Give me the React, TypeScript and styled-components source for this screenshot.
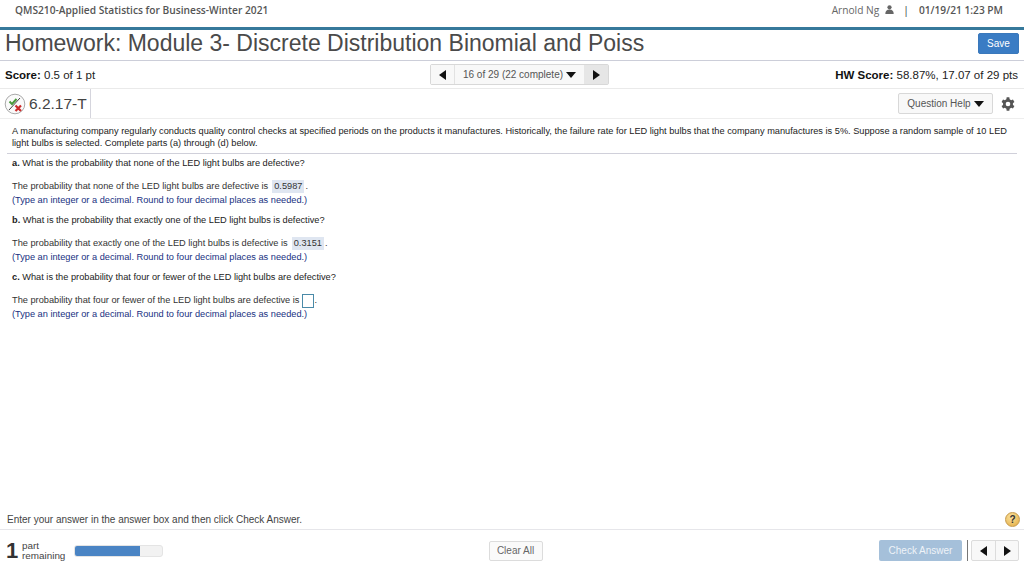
import styled, { createGlobalStyle } from 'styled-components';

const GlobalStyle = createGlobalStyle`
  html, body {
    margin: 0;
    padding: 0;
    background: #fff;
  }
  #root {
    height: 575px;
  }
`;

const parts = [
  {
    label: 'a.',
    question: 'What is the probability that none of the LED light bulbs are defective?',
    answerText: 'The probability that none of the LED light bulbs are defective is',
    value: '0.5987',
  },
  {
    label: 'b.',
    question: 'What is the probability that exactly one of the LED light bulbs is defective?',
    answerText: 'The probability that exactly one of the LED light bulbs is defective is',
    value: '0.3151',
  },
  {
    label: 'c.',
    question: 'What is the probability that four or fewer of the LED light bulbs are defective?',
    answerText: 'The probability that four or fewer of the LED light bulbs are defective is',
    value: '',
  },
];

const LeftArrow = () => (
  <svg width="7" height="10" viewBox="0 0 7 10">
    <path d="M7 0v10L0 5z" fill="#111" />
  </svg>
);

const RightArrow = () => (
  <svg width="7" height="10" viewBox="0 0 7 10">
    <path d="M0 0v10l7-5z" fill="#111" />
  </svg>
);

const DownArrow = () => (
  <svg width="10" height="6" viewBox="0 0 10 6">
    <path d="M0 0h10L5 6z" fill="#111" />
  </svg>
);

const App = () => {
  return (
    <Page>
      <GlobalStyle />
      <TopBar>
        <CourseName>QMS210-Applied Statistics for Business-Winter 2021</CourseName>
        <UserInfo>
          <UserName>Arnold Ng</UserName>
          <svg width="9" height="9" viewBox="0 0 9 9">
            <circle cx="4.5" cy="2.3" r="2.1" fill="#666" />
            <path d="M0.3 9c0-3 1.4-4.6 4.2-4.6S8.7 6 8.7 9z" fill="#666" />
          </svg>
          <Pipe>|</Pipe>
          <DateText>01/19/21 1:23 PM</DateText>
        </UserInfo>
      </TopBar>
      <TitleRow>
        <Title>Homework: Module 3- Discrete Distribution Binomial and Poiss</Title>
        <SaveButton>Save</SaveButton>
      </TitleRow>
      <ScoreRow>
        <ScoreText>
          <b>Score:</b> 0.5 of 1 pt
        </ScoreText>
        <Pager>
          <PagerArrow>
            <LeftArrow />
          </PagerArrow>
          <PagerLabel>
            16 of 29 (22 complete)
            <DownArrow />
          </PagerLabel>
          <PagerArrow $shaded>
            <RightArrow />
          </PagerArrow>
        </Pager>
        <HwScore>
          <b>HW Score:</b> 58.87%, 17.07 of 29 pts
        </HwScore>
      </ScoreRow>
      <QuestionRow>
        <QuestionId>
          <svg width="22" height="22" viewBox="0 0 22 22">
            <circle cx="11" cy="11" r="9.8" fill="#fafafa" stroke="#aaa" strokeWidth="1" />
            <path d="M5 17L16 5" stroke="#444" strokeWidth="1" />
            <path d="M5.5 8.5l2.5 2.5 4.5-5" stroke="#4a9a3c" strokeWidth="2" fill="none" />
            <path d="M11.5 12.5l5.5 5.5M17 12.5l-5.5 5.5" stroke="#cc2a2a" strokeWidth="2.2" />
          </svg>
          <QuestionNumber>6.2.17-T</QuestionNumber>
        </QuestionId>
        <QuestionTools>
          <HelpButton>
            Question Help
            <DownArrow />
          </HelpButton>
          <svg width="14" height="14" viewBox="0 0 24 24">
            <path
              fill="#555"
              d="M19.4 13.5c.1-.5.1-1 .1-1.5s0-1-.1-1.5l2.6-2-2.5-4.3-3.1 1.2c-.8-.6-1.6-1.1-2.6-1.5L13.3 0.6H8.7l-.5 3.3c-1 .4-1.8.9-2.6 1.5L2.5 4.2 0 8.5l2.6 2c-.1.5-.1 1-.1 1.5s0 1 .1 1.5L0 15.5l2.5 4.3 3.1-1.2c.8.6 1.6 1.1 2.6 1.5l.5 3.3h4.6l.5-3.3c1-.4 1.8-.9 2.6-1.5l3.1 1.2 2.5-4.3zM11 16a4 4 0 1 1 0-8 4 4 0 0 1 0 8z"
              transform="translate(1 0)"
            />
          </svg>
        </QuestionTools>
      </QuestionRow>
      <Content>
        <Intro>
          A manufacturing company regularly conducts quality control checks at specified periods on the products it
          manufactures. Historically, the failure rate for LED light bulbs that the company manufactures is 5%. Suppose
          a random sample of 10 LED light bulbs is selected. Complete parts (a) through (d) below.
        </Intro>
        <Parts>
          {parts.map((part) => (
            <Part key={part.label}>
              <Line>
                <b>{part.label}</b> {part.question}
              </Line>
              <AnswerBlock>
                <AnswerLine>
                  {part.answerText}
                  {part.value ? <Filled>{part.value}</Filled> : <EmptyBox />}.
                </AnswerLine>
                <Hint>(Type an integer or a decimal. Round to four decimal places as needed.)</Hint>
              </AnswerBlock>
            </Part>
          ))}
        </Parts>
      </Content>
      <Instruction>
        <span>Enter your answer in the answer box and then click Check Answer.</span>
        <HelpBubble>?</HelpBubble>
      </Instruction>
      <Footer>
        <Remaining>
          <BigNumber>1</BigNumber>
          <RemainingText>
            part
            <br />
            remaining
          </RemainingText>
          <Progress>
            <ProgressFill style={{ width: `${(66 / 89) * 100}%` }} />
          </Progress>
        </Remaining>
        <ClearButton>Clear All</ClearButton>
        <FooterActions>
          <CheckButton>Check Answer</CheckButton>
          <Divider />
          <NavGroup>
            <NavButton>
              <LeftArrow />
            </NavButton>
            <NavButton>
              <RightArrow />
            </NavButton>
          </NavGroup>
        </FooterActions>
      </Footer>
    </Page>
  );
};
export default App;

const Page = styled.div`
  width: 1024px;
  height: 575px;
  display: flex;
  flex-direction: column;
  overflow: hidden;
  font-family: 'Liberation Sans', Arial, sans-serif;
  color: #222;
`;

const TopBar = styled.div`
  height: 27px;
  flex: none;
  box-sizing: border-box;
  padding: 0 21px 8px 15px;
  display: flex;
  align-items: center;
  justify-content: space-between;
`;

const CourseName = styled.div`
  font-family: 'Open Sans', sans-serif;
  font-weight: 600;
  font-size: 10.2px;
  color: #555;
`;

const UserInfo = styled.div`
  display: flex;
  align-items: center;
  font-family: 'Open Sans', sans-serif;
  font-size: 10.2px;
  color: #666;
  gap: 6px;
`;

const UserName = styled.span`
  margin-right: 0;
`;

const Pipe = styled.span`
  margin: 0 4px 0 3px;
  color: #333;
`;

const DateText = styled.span`
  font-weight: 600;
  color: #555;
`;

const TitleRow = styled.div`
  height: 34px;
  flex: none;
  box-sizing: border-box;
  border-top: 3px solid #36799b;
  border-bottom: 1px solid #ccced9;
  padding: 0 5px 4px;
  display: flex;
  align-items: center;
  justify-content: space-between;
`;

const Title = styled.h1`
  margin: 0;
  font-weight: 400;
  font-size: 23px;
  color: #4a4a4a;
  white-space: nowrap;
`;

const SaveButton = styled.button`
  width: 41px;
  height: 21px;
  padding: 0;
  font: 10px 'Liberation Sans', sans-serif;
  color: #fff;
  background: #3a7cc4;
  border: 1px solid #3a78bb;
  border-radius: 2px;
`;

const ScoreRow = styled.div`
  height: 28px;
  flex: none;
  box-sizing: border-box;
  border-bottom: 1px solid #eaeaea;
  padding: 0 6px 0 5px;
  display: grid;
  grid-template-columns: 425px 179px 1fr;
  align-items: center;
  font-size: 11.5px;
  color: #222;
`;

const ScoreText = styled.div`
  b {
    color: #111;
  }
`;

const HwScore = styled.div`
  text-align: right;
  b {
    color: #111;
  }
`;

const Pager = styled.div`
  height: 21px;
  box-sizing: border-box;
  display: flex;
  border: 1px solid #d8d8d8;
  border-radius: 2px;
  background: #f8f8f8;
`;

const PagerArrow = styled.div<{ $shaded?: boolean }>`
  width: ${(p) => (p.$shaded ? '24px' : '23px')};
  display: flex;
  align-items: center;
  justify-content: center;
  background: ${(p) => (p.$shaded ? '#e6e6e6' : '#f8f8f8')};
`;

const PagerLabel = styled.div`
  flex: 1;
  display: flex;
  align-items: center;
  justify-content: center;
  gap: 3px;
  border-left: 1px solid #e2e2e2;
  font-size: 10px;
  color: #555;
`;

const QuestionRow = styled.div`
  height: 30px;
  flex: none;
  box-sizing: border-box;
  border-bottom: 1px solid #eeeeee;
  padding: 0 9px 0 4px;
  display: flex;
  align-items: center;
  justify-content: space-between;
`;

const QuestionId = styled.div`
  height: 100%;
  display: flex;
  align-items: center;
  gap: 3px;
`;

const QuestionNumber = styled.div`
  height: 100%;
  padding-right: 3px;
  display: flex;
  align-items: center;
  font-size: 15.5px;
  color: #444;
  border-right: 1px solid #d5d5dd;
`;

const QuestionTools = styled.div`
  display: flex;
  align-items: center;
  gap: 8px;
`;

const HelpButton = styled.button`
  width: 95px;
  height: 21px;
  padding: 0;
  display: flex;
  align-items: center;
  justify-content: center;
  gap: 3px;
  font: 10px 'Liberation Sans', sans-serif;
  color: #555;
  background: #f8f8f8;
  border: 1px solid #d8d8d8;
  border-radius: 2px;
`;

const Content = styled.div`
  flex: 1;
  padding: 7px 7px 0;
  font-size: 9.22px;
  line-height: 11.5px;
  color: #222;
`;

const Intro = styled.div`
  padding: 0 5px 4px;
  border-bottom: 1px solid #d0d0da;
`;

const Parts = styled.div`
  display: flex;
  flex-direction: column;
  gap: 8.75px;
  padding: 4px 5px 0;
`;

const Part = styled.div`
  display: flex;
  flex-direction: column;
  gap: 10px;
`;

const Line = styled.div`
  color: #222;
`;

const AnswerBlock = styled.div`
  display: flex;
  flex-direction: column;
  gap: 1.25px;
  color: #333;
`;

const AnswerLine = styled.div`
  display: flex;
  align-items: center;
  height: 14px;
  white-space: pre;
`;

const Filled = styled.span`
  margin: 0 1px 0 4px;
  padding: 1px 2px;
  background: #dfe6f1;
  color: #333;
`;

const EmptyBox = styled.span`
  width: 12px;
  height: 14px;
  margin-left: 3px;
  box-sizing: border-box;
  border: 1px solid #4a8aa8;
`;

const Hint = styled.div`
  color: #18307f;
`;

const Instruction = styled.div`
  height: 25px;
  flex: none;
  box-sizing: border-box;
  border-bottom: 1px solid #e6e6ea;
  padding: 5px 4px 0 7px;
  display: flex;
  align-items: center;
  justify-content: space-between;
  font-size: 10px;
  color: #444;
`;

const HelpBubble = styled.div`
  width: 15px;
  height: 15px;
  display: flex;
  align-items: center;
  justify-content: center;
  border-radius: 50%;
  font-weight: 700;
  font-size: 10px;
  color: #333;
  background: radial-gradient(circle at 40% 30%, #fbe3a0, #e2a93c);
  border: 1px solid #c69a4c;
  box-sizing: border-box;
`;

const Footer = styled.div`
  height: 45px;
  flex: none;
  box-sizing: border-box;
  padding: 0 5px 4px 6px;
  display: grid;
  grid-template-columns: 1fr auto 1fr;
  align-items: center;
`;

const Remaining = styled.div`
  display: flex;
  align-items: center;
`;

const BigNumber = styled.div`
  font-size: 22px;
  font-weight: 700;
  color: #333;
  width: 16px;
`;

const RemainingText = styled.div`
  font-size: 9.9px;
  line-height: 10px;
  color: #444;
  width: 52px;
`;

const Progress = styled.div`
  width: 89px;
  height: 12px;
  background: #f2f2f2;
  border: 1px solid #e4e4e4;
  box-sizing: border-box;
  border-radius: 3px;
  overflow: hidden;
`;

const ProgressFill = styled.div`
  height: 100%;
  background: #4a84c4;
`;

const ClearButton = styled.button`
  width: 54px;
  height: 20px;
  margin-left: 6px;
  padding: 0;
  font: 10px 'Liberation Sans', sans-serif;
  color: #666;
  background: #fafafa;
  border: 1px solid #dcdcdc;
  border-radius: 2px;
`;

const FooterActions = styled.div`
  display: flex;
  align-items: center;
  justify-content: flex-end;
`;

const CheckButton = styled.button`
  width: 83px;
  height: 21px;
  padding: 0;
  font: 10px 'Liberation Sans', sans-serif;
  color: #eef3f8;
  background: #a5c0da;
  border: none;
  border-radius: 2px;
`;

const Divider = styled.div`
  width: 1px;
  height: 21px;
  margin: 0 3px 0 5px;
  background: #777;
`;

const NavGroup = styled.div`
  display: flex;
  border: 1px solid #dcdcdc;
  border-radius: 2px;
  background: #f8f8f8;
`;

const NavButton = styled.div`
  width: 23px;
  height: 19px;
  box-sizing: border-box;
  display: flex;
  align-items: center;
  justify-content: center;
  & + & {
    border-left: 1px solid #dcdcdc;
  }
`;
